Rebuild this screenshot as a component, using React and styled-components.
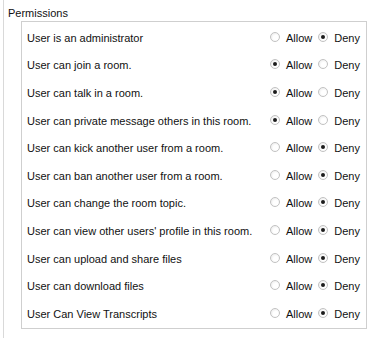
import React from "react";
import styled, { createGlobalStyle } from "styled-components";

const Global = createGlobalStyle`
  html, body { margin: 0; padding: 0; background: #fff; }
  body { font-family: "Liberation Sans", Arial, sans-serif; font-size: 11px; color: #111; }
`;

const Frame = styled.div`
  margin-left: 3px;
  height: 338px;
  border-left: 1px solid #d9d9d9;
  box-sizing: border-box;
  padding-top: 6px;
`;

const Title = styled.div`
  padding-left: 4px;
  height: 14px;
  line-height: 14px;
  font-size: 11px;
`;

const Box = styled.div`
  margin-left: 17px;
  margin-top: 1px;
  width: 346px;
  border: 1px solid #cfcfcf;
  box-sizing: border-box;
  padding-top: 2px;
  display: flex;
  flex-direction: column;
`;

const Row = styled.div`
  height: 27.6px;
  display: flex;
  align-items: center;
  justify-content: space-between;
  padding: 0 6px 0 5px;
`;

const Label = styled.span`
  white-space: nowrap;
`;

const Options = styled.div`
  display: flex;
  align-items: center;
`;

const Option = styled.label`
  display: flex;
  align-items: center;
  margin-left: ${(p) => (p.$first ? "0" : "6px")};
`;

const Dot = styled.span`
  width: 10px;
  height: 10px;
  border-radius: 50%;
  box-sizing: border-box;
  border: 1px solid #c2c2c2;
  background: radial-gradient(circle at 60% 60%, #ffffff 35%, #e4e4e4 100%);
  margin-right: 6px;
  margin-top: -2px;
  display: flex;
  align-items: center;
  justify-content: center;
  &::after {
    content: "";
    width: 4px;
    height: 4px;
    border-radius: 50%;
    background: ${(p) => (p.$on ? "#1c1c1c" : "transparent")};
  }
`;

const rows = [
  ["User is an administrator", "deny"],
  ["User can join a room.", "allow"],
  ["User can talk in a room.", "allow"],
  ["User can private message others in this room.", "allow"],
  ["User can kick another user from a room.", "deny"],
  ["User can ban another user from a room.", "deny"],
  ["User can change the room topic.", "deny"],
  ["User can view other users' profile in this room.", "deny"],
  ["User can upload and share files", "deny"],
  ["User can download files", "deny"],
  ["User Can View Transcripts", "deny"],
];

export default function App() {
  return (
    <>
      <Global />
      <Frame>
        <Title>Permissions</Title>
        <Box>
          {rows.map(([text, v]) => (
            <Row key={text}>
              <Label>{text}</Label>
              <Options>
                <Option $first>
                  <Dot $on={v === "allow"} />
                  Allow
                </Option>
                <Option>
                  <Dot $on={v === "deny"} />
                  Deny
                </Option>
              </Options>
            </Row>
          ))}
        </Box>
      </Frame>
    </>
  );
}
